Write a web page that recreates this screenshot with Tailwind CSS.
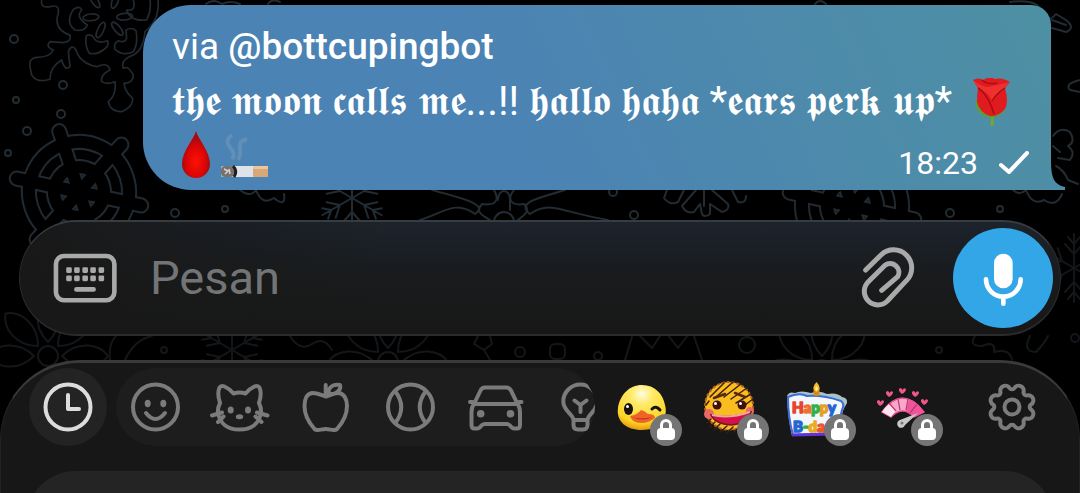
<!DOCTYPE html>
<html lang="id">

<head>
    <meta charset="UTF-8">
    <meta name="viewport" content="width=device-width, initial-scale=1.0">
    <script src="https://cdn.jsdelivr.net/npm/@tailwindcss/browser@4"></script>
    <title>Chat</title>
</head>

<body class="bg-black">
    <div class="relative flex flex-col h-screen overflow-hidden bg-black font-['Roboto',sans-serif]">
        <!-- Wallpaper: the wheels are a wide stroke with a narrower black one on top -->
        <svg class="absolute inset-0 w-full h-full" viewBox="0 0 1080 493" preserveAspectRatio="xMidYMin slice" fill="none" stroke-linecap="round" stroke-linejoin="round" aria-hidden="true">
            <defs>
                <g id="flake">
                    <path d="M125 0Q120 25 150 20Q185 10 172 50Q165 90 210 105Q215 125 190 128L150 125Q135 140 160 150Q150 172 110 172Q85 175 90 200L95 225Q110 250 150 238Q150 200 185 180Q195 215 210 200L205 155Q215 130 228 150Q240 190 290 200Q325 185 330 210Q300 225 305 245Q320 255 345 245Q350 285 325 305Q330 335 365 335Q400 320 398 295Q375 275 372 250Q400 250 400 225Q385 195 370 205Q360 180 400 165Q430 150 435 95Q480 60 474 0" />
                    <path d="M258 110Q262 100 278 108Q290 135 322 122Q330 135 310 150Q290 165 268 160Q255 140 258 110ZM378 90Q395 80 408 92Q415 130 400 155Q370 170 345 148Q340 130 355 122Q375 130 380 115ZM220 28Q240 15 245 30Q225 50 262 75Q255 95 225 90Q195 70 220 28ZM400 0Q410 35 380 30Q390 65 440 60Q455 30 450 0" />
                    <ellipse cx="302" cy="90" rx="9" ry="25" transform="rotate(25 302 90)" />
                    <ellipse cx="352" cy="86" rx="9" ry="24" transform="rotate(-40 352 86)" />
                    <ellipse cx="273" cy="52" rx="24" ry="10" transform="rotate(-5 273 52)" />
                    <ellipse cx="374" cy="50" rx="24" ry="10" transform="rotate(-5 374 50)" />
                    <ellipse cx="345" cy="4" rx="9" ry="22" transform="rotate(20 345 4)" />
                    <ellipse cx="285" cy="4" rx="9" ry="22" transform="rotate(-35 285 4)" />
                </g>
                <g id="wheel">
                    <circle r="50" />
                    <circle r="25" />
                    <path d="M0-64V64M-55-32L55 32M55-32L-55 32" />
                </g>
                <g id="petals">
                    <path d="M0-14C-16-30-12-52 0-60C12-52 16-30 0-14Z" />
                    <path d="M0-14C-16-30-12-52 0-60C12-52 16-30 0-14Z" transform="rotate(45)" />
                    <path d="M0-14C-16-30-12-52 0-60C12-52 16-30 0-14Z" transform="rotate(-45)" />
                    <path d="M0-14C-16-30-12-52 0-60C12-52 16-30 0-14Z" transform="rotate(90)" />
                    <path d="M0-14C-16-30-12-52 0-60C12-52 16-30 0-14Z" transform="rotate(-90)" />
                    <circle r="10" />
                </g>
                <g id="twig">
                    <path d="M0 0V-34M0-14L-9-24M0-14L9-24M0-24L-6-31M0-24L6-31" />
                </g>
                <g id="star">
                    <use href="#twig" />
                    <use href="#twig" transform="rotate(60)" />
                    <use href="#twig" transform="rotate(120)" />
                    <use href="#twig" transform="rotate(180)" />
                    <use href="#twig" transform="rotate(240)" />
                    <use href="#twig" transform="rotate(300)" />
                </g>
            </defs>
            <g stroke="#222a31" stroke-width="16">
                <use href="#wheel" transform="translate(79 192) rotate(-18)" />
                <use href="#wheel" transform="translate(852 206) rotate(-18)" />
            </g>
            <g stroke="#000" stroke-width="12">
                <use href="#wheel" transform="translate(79 192) rotate(-18)" />
                <use href="#wheel" transform="translate(852 206) rotate(-18)" />
            </g>
            <use href="#flake" transform="scale(.3333)" stroke="#222a31" stroke-width="5" />
            <g stroke="#222c32" stroke-width="2">
                <use href="#star" transform="translate(352 198)" />
                <path d="M432 190C460 198 490 204 475 214C455 200 445 212 420 220M565 190C540 198 515 202 530 214C550 200 560 212 608 220M494 190C500 200 496 206 482 204C474 212 484 216 490 220M514 190C506 200 512 206 524 204C532 212 522 216 518 220M498 200C498 188 510 188 510 200V210" />
                <circle cx="504" cy="222" r="10" />
                <path d="M667 190L664 198Q670 206 678 202L684 190M704 190V206M696 190L682 206Q686 214 694 212L700 204L702 214Q704 218 710 214V204L722 212Q730 210 728 204L712 190M732 190L738 202Q746 204 746 196" />
                <path d="M240 190Q250 198 256 190Q262 206 274 198Q286 208 284 194" />
                <path d="M206 4Q214-2 222 4Q230 0 240 4M268 4Q272-2 280 2" />
                <path d="M815 4Q820-2 826 4M1010 2Q1040-2 1042 14Q1048 24 1056 14L1066 20Q1076 28 1066 32L1052 28M1052 20L1066 25" />
                <path d="M1080 80Q1064 84 1070 90L1080 92M1053 136Q1060 126 1070 132Q1076 142 1068 146Q1076 152 1070 160L1058 158M1053 146L1060 152M1056 166Q1064 170 1068 180L1078 184M1013 190Q1020 196 1026 190Q1032 206 1044 200Q1056 208 1062 194" />
                <circle cx="14" cy="39" r="4" /><circle cx="63" cy="85" r="4" />
                <circle cx="16" cy="100" r="3" /><circle cx="61" cy="114" r="4" />
                <circle cx="27" cy="131" r="4" /><circle cx="8" cy="153" r="3" />
                <circle cx="175" cy="213" r="4" /><circle cx="225" cy="209" r="3" />
                <circle cx="613" cy="192" r="4" /><circle cx="634" cy="215" r="4" />
                <circle cx="950" cy="213" r="4" /><circle cx="1000" cy="209" r="3" />
            </g>
            <g stroke="#14171a" stroke-width="2">
                <use href="#petals" transform="translate(48 356)" />
                <use href="#petals" transform="translate(388 362)" />
                <use href="#petals" transform="translate(822 370)" />
                <use href="#star" transform="translate(1074 268)" />
                <use href="#star" transform="translate(232 350)" />
                <path d="M625 360L634 330L652 348L664 330L678 348L692 330L702 360M110 360Q108 344 116 336M125 360Q134 340 152 336M478 336L474 344L484 350L492 344L490 336M484 350L490 360" />
                <path d="M975 336Q968 346 982 346Q996 340 994 352Q1010 348 1012 360M1030 336Q1022 352 1036 352Q1044 344 1048 336M290 336Q300 352 312 344Q324 336 332 350" />
                <rect x="550" y="344" width="15" height="15" rx="5" />
                <circle cx="520" cy="352" r="5" /><circle cx="598" cy="356" r="4" />
                <circle cx="747" cy="345" r="8" /><circle cx="164" cy="350" r="3" />
                <circle cx="939" cy="350" r="3" /><circle cx="1075" cy="338" r="4" />
            </g>
        </svg>

        <!-- Outgoing message -->
        <div class="relative shrink-0 mt-[5px] ml-[143px] mr-[29px] pt-[15px] pb-[6px] pl-[29px] pr-[21px] rounded-l-[48px] rounded-tr-[20px] bg-linear-[65deg] from-[#4b83b4] from-40% to-[#4e90a3] text-white">
            <p class="flex items-center h-[54px] text-[37px]">
                <span class="whitespace-pre">via </span><a href="#" class="font-medium">@bottcupingbot</a>
            </p>
            <p class="flex items-center h-[56px] text-[41px] whitespace-nowrap">
                <span class="mr-4">𝖙𝖍𝖊 𝖒𝖔𝖔𝖓 𝖈𝖆𝖑𝖑𝖘 𝖒𝖊...!! 𝖍𝖆𝖑𝖑𝖔 𝖍𝖆𝖍𝖆 *𝖊𝖆𝖗𝖘 𝖕𝖊𝖗𝖐 𝖚𝖕*</span>
                <svg class="size-[48px] shrink-0" viewBox="0 0 48 48" role="img" aria-label="rose">
                    <path d="M23 34Q25 42 24 48" stroke="#6cab35" stroke-width="3" fill="none" />
                    <path d="M8 22Q6 36 22 40Q38 38 38 26L30 36Q18 36 8 22Z" fill="#5c9e35" />
                    <path d="M5 2Q11-1 15 2Q21-2 27 1Q34-1 42 4L37 10Q41 24 37 31Q30 39 22 38Q12 35 9 24Q9 16 10 10Z" fill="#e01b20" />
                    <path d="M5 2Q14 9 20 9Q30 7 42 4L36 10Q28 15 24 22Q20 14 10 10Z" fill="#f0302f" />
                    <path d="M10 10Q20 16 26 36M37 10Q28 16 24 23M14 2Q19 7 29 5" fill="none" stroke="#a80d13" stroke-width="1.5" />
                </svg>
            </p>
            <div class="flex items-center h-[54px]">
                <svg class="size-[48px] mb-1" viewBox="0 0 48 48" role="img" aria-label="drop of blood">
                    <defs>
                        <radialGradient id="blood" cx=".5" cy=".65" r=".5">
                            <stop offset="0" stop-color="#ff1205" />
                            <stop offset=".65" stop-color="#dc0505" />
                            <stop offset="1" stop-color="#a80a10" />
                        </radialGradient>
                    </defs>
                    <path d="M24 0C26 8 38 20 38 33A14 14 0 0 1 10 33C10 20 22 8 24 0Z" fill="url(#blood)" />
                </svg>
                <svg class="size-[48px] mb-1" viewBox="0 0 48 48" role="img" aria-label="cigarette">
                    <path d="M12 4C-1 14 19 18 12 28M27 8C13 12 25 18 18 29" fill="none" stroke="#6f97b9" stroke-width="4" opacity=".6" />
                    <rect x="1" y="35" width="47" height="11" rx="2" fill="#dde3e8" />
                    <rect x="33" y="35" width="15" height="11" rx="1" fill="#d8a878" />
                    <path d="M33 35H48V38H33Z" fill="#ebc59d" />
                    <rect x="1" y="35" width="13" height="11" rx="4" fill="#77716d" />
                    <path d="M4 38L8 40L5 43M9 38L10 43" stroke="#d5d5d5" stroke-width="1.5" fill="none" />
                    <path d="M13 35Q18 40 14 46" stroke="#211d1c" stroke-width="3" fill="none" />
                </svg>
                <time class="ml-auto mt-3 text-[32px]">18:23</time>
                <svg class="ml-[20px] mt-3 w-[32px] h-[24px]" viewBox="0 0 32 24" role="img" aria-label="sent">
                    <path d="M3 14L11 21L29 2" fill="none" stroke="#fff" stroke-width="4" stroke-linecap="round" stroke-linejoin="round" />
                </svg>
            </div>
            <svg class="absolute -right-[14px] bottom-0 w-[15px] h-[28px]" viewBox="0 0 15 28" aria-hidden="true">
                <path d="M0 0H1C1 15 4 23 15 25V28H0Z" fill="#4e8da7" />
            </svg>
        </div>

        <!-- Message field -->
        <form class="relative flex shrink-0 items-center mt-[30px] mx-[19px] h-[116px] pl-[32px] pr-[7px] rounded-full border-y-2 border-x border-t-[#373c41] border-b-[#2b2b2b] border-x-[#2b2b2b] bg-linear-to-b from-[#1c232c] via-[#191b1c] to-[#171717]">
            <div class="absolute inset-0 rounded-full bg-linear-to-r from-[#181818] via-transparent via-35% to-transparent"></div>
            <button type="button" class="relative shrink-0" aria-label="Keyboard">
                <svg class="w-[66px] h-[52px]" viewBox="155 125 200 157" fill="#a9a9a9">
                    <rect x="167" y="137" width="177" height="134" rx="24" fill="none" stroke="#a9a9a9" stroke-width="14" />
                    <path d="M198 175q0-4 4-4h9q4 0 4 4v9q0 4-4 4h-9q-4 0-4-4ZM222 175q0-4 4-4h9q4 0 4 4v9q0 4-4 4h-9q-4 0-4-4ZM247 175q0-4 4-4h9q4 0 4 4v9q0 4-4 4h-9q-4 0-4-4ZM271 175q0-4 4-4h9q4 0 4 4v9q0 4-4 4h-9q-4 0-4-4ZM296 175q0-4 4-4h9q4 0 4 4v9q0 4-4 4h-9q-4 0-4-4Z" />
                    <path d="M198 200q0-4 4-4h9q4 0 4 4v9q0 4-4 4h-9q-4 0-4-4ZM222 200q0-4 4-4h9q4 0 4 4v9q0 4-4 4h-9q-4 0-4-4ZM247 200q0-4 4-4h9q4 0 4 4v9q0 4-4 4h-9q-4 0-4-4ZM271 200q0-4 4-4h9q4 0 4 4v9q0 4-4 4h-9q-4 0-4-4ZM296 200q0-4 4-4h9q4 0 4 4v9q0 4-4 4h-9q-4 0-4-4Z" />
                    <rect x="222" y="231" width="66" height="14" rx="7" />
                </svg>
            </button>
            <input type="text" aria-label="Pesan" placeholder="Pesan" class="relative flex-1 min-w-0 ml-[32px] text-[47px] text-white placeholder:text-[#737475] outline-none">
            <button type="button" class="relative shrink-0 mr-[37px]" aria-label="Attach">
                <svg class="w-[56px] h-[64px]" viewBox="240 110 168 192" fill="none" stroke="#a9a9a9" stroke-width="15" stroke-linecap="round" stroke-linejoin="round">
                    <path d="M257 182L303 137A53 53 0 0 1 379 214L322 275A40 40 0 0 1 265 217L315 168A26 26 0 0 1 353 202L305 243" />
                </svg>
            </button>
            <button type="button" class="relative shrink-0 size-[100px] rounded-full bg-[#33a6e8]" aria-label="Voice message">
                <svg class="size-full" viewBox="518 54 300 300" fill="none" stroke="#fff" stroke-width="14" stroke-linecap="round">
                    <rect x="641" y="131" width="56" height="104" rx="28" fill="#fff" stroke="none" />
                    <path d="M617 208A52 52 0 0 0 721 208M669 262V281" />
                </svg>
            </button>
        </form>

        <!-- Emoji panel -->
        <div class="relative flex flex-1 flex-col min-h-0 mt-6 rounded-t-[80px] border-t-[3px] border-x border-t-[#3a3a3a] border-x-[#222] bg-[#171717]">
            <div class="flex items-center gap-[9px] mt-[5px] px-[28px]">
                <button type="button" class="flex shrink-0 items-center justify-center size-[78px] rounded-full bg-[#232323] text-[#dcdcdc]" aria-label="Recent">
                    <svg class="size-[60px]" viewBox="0 0 60 60" fill="none" stroke="currentColor" stroke-width="4" stroke-linecap="round" stroke-linejoin="round">
                        <circle cx="30" cy="30" r="22.5" />
                        <path d="M30 18V32H41" />
                    </svg>
                </button>
                <div class="flex w-[479px] gap-[7px] rounded-full bg-[#1d1d1d] text-[#7b7b7b] overflow-hidden">
                    <button type="button" class="flex shrink-0 items-center justify-center size-[78px]" aria-label="Smileys">
                        <svg class="size-[60px]" viewBox="0 0 60 60" fill="none" stroke="currentColor" stroke-width="4" stroke-linecap="round">
                            <circle cx="30.5" cy="30" r="22.5" />
                            <path d="M21 36Q30.500 48 40 36" />
                            <g fill="currentColor" stroke="none"><ellipse cx="22.700" cy="26.500" rx="3" ry="3.700" /><ellipse cx="38.300" cy="26.500" rx="3" ry="3.700" /></g>
                        </svg>
                    </button>
                    <button type="button" class="flex shrink-0 items-center justify-center size-[78px]" aria-label="Animals">
                        <svg class="size-[60px]" viewBox="0 0 60 60" fill="none" stroke="currentColor" stroke-width="4" stroke-linecap="round" stroke-linejoin="round">
                            <path d="M10 26C8 20 8 14 9.500 10.500Q11 8 14.500 9.500Q20 12 23.500 16.500Q29.500 14.500 35.500 16.500Q39 12 44.500 9.500Q48 8 49.500 10.500C51 14 51 20 49 26Q51.500 31 51 36C49 47 41 52.500 29.500 52.500C18 52.500 10 47 8 36Q7.500 31 10 26Z" />
                            <path d="M2 38.500L12 35.500M8 45L13.500 39.500M57.500 38.500L47 35.500M51.500 45L45.500 39.500" />
                            <g fill="currentColor" stroke="none"><ellipse cx="20.700" cy="33" rx="3" ry="3.600" /><ellipse cx="38" cy="33" rx="3" ry="3.600" /><ellipse cx="29.500" cy="39.700" rx="3.700" ry="2.500" /></g>
                        </svg>
                    </button>
                    <button type="button" class="flex shrink-0 items-center justify-center size-[78px]" aria-label="Food">
                        <svg class="size-[60px]" viewBox="0 0 60 60" fill="none" stroke="currentColor" stroke-width="4" stroke-linecap="round" stroke-linejoin="round">
                            <path d="M30.700 19.500C26 18 22 16 18 16C12 16 9.500 22 9.500 29C9.500 38 15 47 19.500 52C22 54.500 26 52 30.700 52C35.500 52 39.500 54.500 42 52C46.500 47 52 38 52 29C52 22 49 16 43 16C39 16 35.500 18 30.700 19.500ZM30.700 8V18M33.500 17C33 10 38 7 45 8C46.500 13 41 17.500 36 17" />
                        </svg>
                    </button>
                    <button type="button" class="flex shrink-0 items-center justify-center size-[78px]" aria-label="Activities">
                        <svg class="size-[60px]" viewBox="0 0 60 60" fill="none" stroke="currentColor" stroke-width="4">
                            <circle cx="30.5" cy="30" r="22.5" />
                            <path d="M15 14Q27.500 30 15 46.500M46 14Q33.500 30 46 46.500" />
                        </svg>
                    </button>
                    <button type="button" class="flex shrink-0 items-center justify-center size-[78px]" aria-label="Travel">
                        <svg class="size-[60px]" viewBox="0 0 60 60" fill="none" stroke="currentColor" stroke-width="4" stroke-linecap="round" stroke-linejoin="round">
                            <path d="M9 27L15.500 13.500Q17 10.500 20 10.500H41.500Q44.500 10.500 46 13.500L52.500 27M5 25H7.500M54 25H56.500M9 27H52.500Q55 30 55 35V48Q55 51.500 52 51.500H49.500Q47 51.500 45.500 49Q44 47 41.500 47H20Q17.500 47 16 49Q14.500 51.500 12 51.500H9.500Q6.500 51.500 6.500 48V35Q6.500 30 9 27Z" />
                            <g fill="currentColor" stroke="none"><circle cx="15.700" cy="36.800" r="3.800" /><circle cx="45.500" cy="36.800" r="3.800" /></g>
                        </svg>
                    </button>
                    <button type="button" class="flex shrink-0 items-center justify-center size-[78px]" aria-label="Objects">
                        <svg class="size-[60px]" viewBox="0 0 60 60" fill="none" stroke="currentColor" stroke-width="4" stroke-linecap="round" stroke-linejoin="round">
                            <path d="M23.500 43C23 37 13.300 34 13.300 24.500A17 17 0 0 1 47.300 24.500C47.300 34 38 37 37.500 43ZM23.500 43V48Q23.500 52.500 28 52.500H33Q37.500 52.500 37.500 48V43M24.500 23.500L30.500 28L36.500 23.500M30.500 28V35" />
                        </svg>
                    </button>
                </div>

                <button type="button" class="relative flex shrink-0 items-center justify-center size-[78px]" aria-label="Duck stickers">
                    <svg class="size-[60px]" viewBox="0 0 60 60">
                        <defs>
                            <radialGradient id="duck" cx=".5" cy=".2" r=".8">
                                <stop offset="0" stop-color="#fffbe0" />
                                <stop offset=".3" stop-color="#ffea66" />
                                <stop offset=".8" stop-color="#fdd426" />
                                <stop offset="1" stop-color="#e59a10" />
                            </radialGradient>
                        </defs>
                        <path d="M29 8C42 8 50 17 52 28C56 42 45 53 29 53C13 53 3 44 5 31C7 18 16 8 29 8Z" fill="url(#duck)" />
                        <ellipse cx="15.500" cy="32" rx="4.500" ry="6" fill="#181210" />
                        <circle cx="14.500" cy="29.500" r="1.500" fill="#fff" />
                        <path d="M39 32Q43 28 47 33" fill="none" stroke="#181210" stroke-width="3" stroke-linecap="round" />
                        <path d="M17 39Q24 38 28 33Q32 34 35 37Q42 37 42 41Q36 46 28 46Q19 46 17 39Z" fill="#ee6427" />
                        <path d="M19 40Q28 43 39 40Q30 45 19 40Z" fill="#b5201c" />
                    </svg>
                    <span class="absolute bottom-0 right-0 flex items-center justify-center size-8 rounded-full bg-[#757575]">
                        <svg class="w-5 h-[22px]" viewBox="0 0 20 22"><path d="M5.500 10V6A4.500 4.500 0 0 1 14.500 6V10" fill="none" stroke="#fff" stroke-width="3" /><rect x="1" y="9" width="18" height="12" rx="4" fill="#fff" /></svg>
                    </span>
                </button>
                <button type="button" class="relative flex shrink-0 items-center justify-center size-[78px]" aria-label="Scribble stickers">
                    <svg class="size-[60px]" viewBox="0 0 60 60">
                        <circle cx="29" cy="29" r="24" fill="#f9bd20" stroke="#b4601f" stroke-width="2" stroke-dasharray="3 2" />
                        <circle cx="9" cy="37" r="5" fill="#ea6966" /><circle cx="50" cy="34" r="4" fill="#ea6966" />
                        <path d="M11 38Q29 42 51 35Q47 47 31 48Q15 47 11 38Z" fill="#d3104a" stroke="#751721" stroke-width="1.500" />
                        <path d="M12 38Q29 42 50 35" fill="none" stroke="#f3a99a" stroke-width="2" />
                        <path d="M10 20L24 6M16 20L33 5M24 20L41 7M31 22L47 11M36 26L51 17M45 28L53 22M7 46L11 42M10 50L15 45M14 53L20 47M20 55L27 49M27 56L33 50M34 55L40 49M6 28L9 24M41 53L48 46" stroke="#3d1d10" stroke-width="1.500" stroke-linecap="round" />
                        <path d="M14 21L25 17M35 16L45 20" stroke="#5a2810" stroke-width="2.500" stroke-linecap="round" />
                        <circle cx="17" cy="28" r="4.500" fill="#3d120e" /><circle cx="42" cy="28" r="4.500" fill="#3d120e" />
                        <circle cx="15.500" cy="26.500" r="1.500" fill="#fff" /><circle cx="40.500" cy="26.500" r="1.500" fill="#fff" />
                    </svg>
                    <span class="absolute bottom-0 right-0 flex items-center justify-center size-8 rounded-full bg-[#757575]">
                        <svg class="w-5 h-[22px]" viewBox="0 0 20 22"><path d="M5.500 10V6A4.500 4.500 0 0 1 14.500 6V10" fill="none" stroke="#fff" stroke-width="3" /><rect x="1" y="9" width="18" height="12" rx="4" fill="#fff" /></svg>
                    </span>
                </button>
                <button type="button" class="relative flex shrink-0 items-center justify-center size-[78px]" aria-label="Birthday stickers">
                    <svg class="size-[60px] overflow-visible" viewBox="0 0 60 60">
                        <path d="M0 19Q2 14 8 16Q14 13 24 16Q32 13 40 17Q50 15 55 20Q61 21 60 26Q58 29 56 34L50 57L5 59Q1 42 0 19Z" fill="#a9c4c7" />
                        <path d="M1 20Q12 15 20 19Q36 18 54 24Q58 27 55 33L49 56L6 58Q1 40 1 20Z" fill="#f3f8ff" stroke="#3c6bdc" stroke-width="2" />
                        <path d="M5 58L49 57" stroke="#6432d8" stroke-width="3" />
                        <rect x="26.500" y="11" width="6" height="8" rx="2" fill="#d8891b" />
                        <path d="M29.500 5Q36 12 29.500 15Q23 12 29.500 5Z" fill="#f4bd24" />
                        <path d="M29.500 9Q32 12 29.500 14Q27 12 29.500 9Z" fill="#fff2a0" />
                        <g class="font-['Lato',sans-serif] font-black" stroke-width="1.500" stroke-linejoin="round">
                            <text x="5" y="36" font-size="15"><tspan fill="#e8442e" stroke="#e8442e">H</tspan><tspan fill="#eb7134" stroke="#eb7134">a</tspan><tspan fill="#39ad4b" stroke="#39ad4b">p</tspan><tspan fill="#e5a020" stroke="#e5a020">p</tspan><tspan fill="#2864d2" stroke="#2864d2">y</tspan></text>
                            <text x="6" y="55" font-size="15"><tspan fill="#2467ce" stroke="#2467ce">B</tspan><tspan fill="#39ad4b" stroke="#39ad4b">-</tspan><tspan fill="#ebaa20" stroke="#ebaa20">d</tspan><tspan fill="#ea592b" stroke="#ea592b">a</tspan></text>
                        </g>
                    </svg>
                    <span class="absolute bottom-0 right-0 flex items-center justify-center size-8 rounded-full bg-[#757575]">
                        <svg class="w-5 h-[22px]" viewBox="0 0 20 22"><path d="M5.500 10V6A4.500 4.500 0 0 1 14.500 6V10" fill="none" stroke="#fff" stroke-width="3" /><rect x="1" y="9" width="18" height="12" rx="4" fill="#fff" /></svg>
                    </span>
                </button>
                <button type="button" class="relative flex shrink-0 items-center justify-center size-[78px]" aria-label="Love meter stickers">
                    <svg class="size-[60px]" viewBox="0 0 60 60">
                        <path d="M8 35Q28 7 50 35L40 40Q29 28 17 40Z" fill="#fba7cb" stroke="#df4e8c" stroke-width="1.500" />
                        <path d="M8 35Q11 30 15 27L22 34Q19 37 17 40Z" fill="#ffe4ef" />
                        <path d="M35 22Q44 25 50 35L40 40Q37 35 32 34Z" fill="#f0559c" />
                        <path d="M15 26L22 34M24 22L26 33M34 22L32 33M43 27L36 36" stroke="#bd3a72" stroke-width="1.300" />
                        <path d="M44 36L31 48A4 4 0 1 1 26 43Z" fill="#c7c9c9" />
                        <circle cx="28" cy="46" r="1.500" fill="#777" />
                        <g fill="#f1558c">
                            <path id="heart" d="M6 29Q1 25 4 23Q6 23 6.500 25Q8 22 10 24Q10 27 6 29Z" />
                            <use href="#heart" x="9" y="-9" />
                            <use href="#heart" x="22" y="-12" />
                            <use href="#heart" x="35" y="-9" />
                            <use href="#heart" x="44" y="-1" />
                        </g>
                    </svg>
                    <span class="absolute bottom-0 right-0 flex items-center justify-center size-8 rounded-full bg-[#757575]">
                        <svg class="w-5 h-[22px]" viewBox="0 0 20 22"><path d="M5.500 10V6A4.500 4.500 0 0 1 14.500 6V10" fill="none" stroke="#fff" stroke-width="3" /><rect x="1" y="9" width="18" height="12" rx="4" fill="#fff" /></svg>
                    </span>
                </button>

                <button type="button" class="flex shrink-0 items-center justify-center ml-auto size-[78px] text-[#7b7b7b]" aria-label="Settings">
                    <svg class="size-[60px]" viewBox="0 0 60 60" fill="none" stroke="currentColor" stroke-width="4" stroke-linejoin="round">
                        <circle cx="30" cy="30" r="7.500" />
                        <path d="M27.500 11A3 3 0 0 0 32.500 11A5 5 0 0 1 41.600 14.800A3 3 0 0 0 45.200 18.400A5 5 0 0 1 49 27.500A3 3 0 0 0 49 32.500A5 5 0 0 1 45.200 41.600A3 3 0 0 0 41.600 45.200A5 5 0 0 1 32.500 49A3 3 0 0 0 27.500 49A5 5 0 0 1 18.400 45.200A3 3 0 0 0 14.800 41.600A5 5 0 0 1 11 32.500A3 3 0 0 0 11 27.500A5 5 0 0 1 14.800 18.400A3 3 0 0 0 18.400 14.800A5 5 0 0 1 27.500 11Z" />
                    </svg>
                </button>
            </div>
            <div class="flex-1 min-h-24 mt-[25px] mx-[26px] rounded-t-[48px] bg-[#242424]"></div>
        </div>
    </div>
</body>

</html>
